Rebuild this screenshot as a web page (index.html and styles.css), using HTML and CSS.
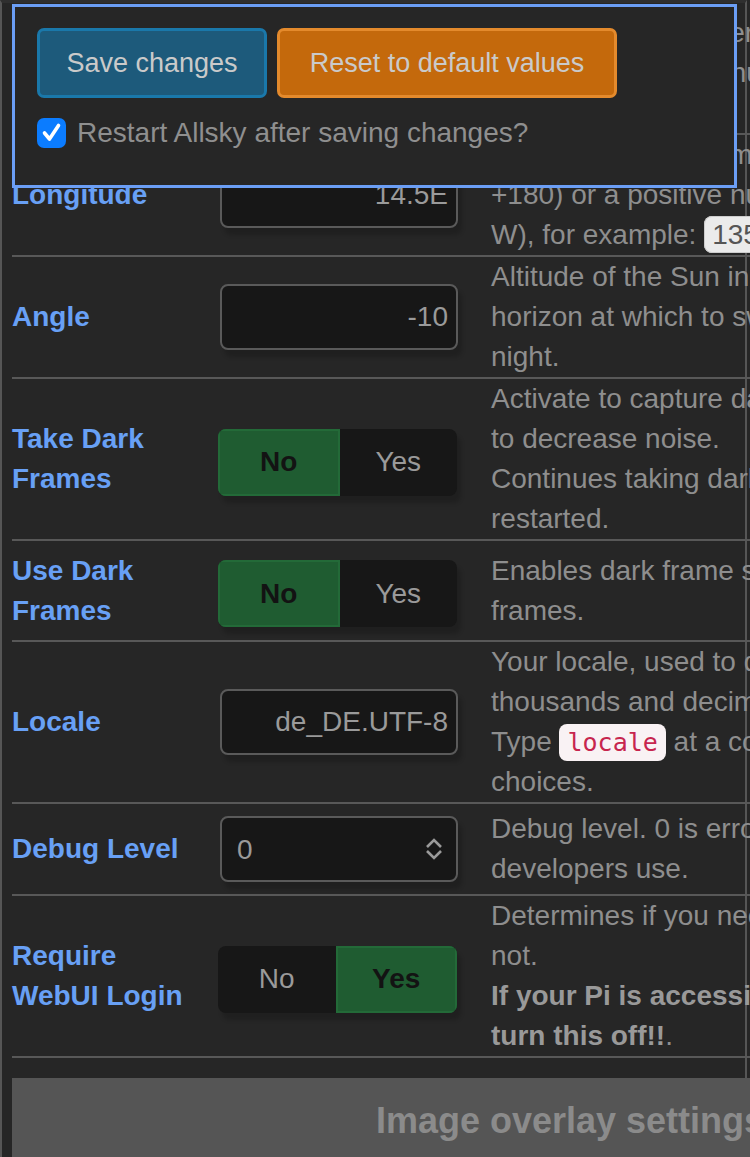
FILE: index.html
```html
<!DOCTYPE html>
<html lang="en">
<head>
    <meta charset="UTF-8">
    <meta name="viewport" content="width=device-width, initial-scale=1.0">
    <title>Allsky Settings</title>
    <link rel="stylesheet" href="styles.css">
</head>
<body>
    <div class="page">
        <div class="settings">
            <div class="row">
                <div class="label">Latitude</div>
                <div class="control"><input class="field" type="text" value="48.2N"></div>
                <div class="desc">Latitude of the camera. Use a negative number for<br>South or a positive number followed by N or S, fo<br>example: <span class="example">35.2N</span>.</div>
            </div>
            <div class="row">
                <div class="label">Longitude</div>
                <div class="control"><input class="field" type="text" value="14.5E"></div>
                <div class="desc">Longitude of the camera. Use a number from (-180 to<br>+180) or a positive number followed by E or<br>W), for example: <span class="example">135.5W</span>.</div>
            </div>
            <div class="row">
                <div class="label">Angle</div>
                <div class="control"><input class="field" type="text" value="-10"></div>
                <div class="desc">Altitude of the Sun in degrees below the<br>horizon at which to switch between day and<br>night.</div>
            </div>
            <div class="row">
                <div class="label">Take Dark Frames</div>
                <div class="control toggle-cell">
                    <div class="toggle"><span class="opt on">No</span><span class="opt">Yes</span></div>
                </div>
                <div class="desc">Activate to capture dark frames which are used<br>to decrease noise.<br>Continues taking dark frames until disabled or Allsky<br>restarted.</div>
            </div>
            <div class="row">
                <div class="label">Use Dark Frames</div>
                <div class="control toggle-cell">
                    <div class="toggle"><span class="opt on">No</span><span class="opt">Yes</span></div>
                </div>
                <div class="desc">Enables dark frame subtraction using the captured<br>frames.</div>
            </div>
            <div class="row">
                <div class="label">Locale</div>
                <div class="control"><input class="field" type="text" value="de_DE.UTF-8"></div>
                <div class="desc">Your locale, used to determine the format of<br>thousands and decimal separators.<br>Type <code>locale</code> at a command prompt to see possible<br>choices.</div>
            </div>
            <div class="row compact">
                <div class="label">Debug Level</div>
                <div class="control">
                    <div class="select-wrap">
                        <select class="field select">
                            <option selected>0</option>
                            <option>1</option>
                            <option>2</option>
                            <option>3</option>
                            <option>4</option>
                        </select>
                        <svg class="chevrons" width="18" height="26" viewBox="0 0 18 26">
                            <polyline points="2,11 9,4 16,11" fill="none" stroke="#9a9a9a" stroke-width="2.6"/>
                            <polyline points="2,15 9,22 16,15" fill="none" stroke="#9a9a9a" stroke-width="2.6"/>
                        </svg>
                    </div>
                </div>
                <div class="desc">Debug level. 0 is errors only; 1 adds info; 3 is for<br>developers use.</div>
            </div>
            <div class="row">
                <div class="label">Require WebUI Login</div>
                <div class="control toggle-cell">
                    <div class="toggle"><span class="opt">No</span><span class="opt on">Yes</span></div>
                </div>
                <div class="desc">Determines if you need to log in to the WebUI or<br>not.<br><strong>If your Pi is accessible from the Internet, DO NOT<br>turn this off!!</strong>.</div>
            </div>

            <div class="section-header">Image overlay settings</div>
        </div>

        <div class="save-bar">
            <div class="buttons">
                <button class="btn btn-save">Save changes</button>
                <button class="btn btn-reset">Reset to default values</button>
            </div>
            <label class="restart">
                <span class="checkbox">
                    <svg width="29" height="29" viewBox="0 0 29 29">
                        <polyline points="7.5,15 12.5,21 21.5,7.5" fill="none" stroke="#fff" stroke-width="3.6" stroke-linecap="round" stroke-linejoin="round"/>
                    </svg>
                </span>
                Restart Allsky after saving changes?
            </label>
        </div>
    </div>
</body>
</html>
```

FILE: styles.css
```css
* {
    box-sizing: border-box;
}

body {
    margin: 0;
    background-color: #262626;
    font-family: "Liberation Sans", Arial, Helvetica, sans-serif;
    overflow: hidden;
}

.page {
    position: relative;
    width: 747px;
    min-height: 1157px;
    border-left: 2px solid #565656;
    border-right: 2px solid #565656;
    border-top: 3px solid #2f2f2f;
    padding: 10px 0 0 10px;
}

.settings {
    width: 1116px;
}

.row {
    display: grid;
    grid-template-columns: 208px 271px 1fr;
    align-items: center;
    border-bottom: 2px solid #585858;
}

.label {
    color: #68a0f5;
    font-weight: bold;
    font-size: 28px;
    line-height: 40px;
    padding-right: 16px;
}

.control {
    padding: 16px 0;
}

.control.toggle-cell {
    padding: 19px 0 13px;
}

.row.compact .control {
    padding: 12px 0;
}

.desc {
    color: #8e8e8e;
    font-size: 28px;
    line-height: 40px;
    white-space: nowrap;
}

.desc strong {
    color: #999;
}

.field {
    display: block;
    width: 238px;
    height: 66px;
    margin: 0;
    border: 2px solid #5a5a5a;
    border-radius: 8px;
    background-color: #171717;
    color: #9a9a9a;
    font-family: inherit;
    font-size: 28px;
    text-align: right;
    padding: 0 8px;
    box-shadow: 4px 7px 4px rgba(0, 0, 0, 0.18);
    outline: none;
}

.select-wrap {
    position: relative;
    width: 238px;
}

.select {
    appearance: none;
    -webkit-appearance: none;
    text-align: left;
    padding: 0 15px;
}

.chevrons {
    position: absolute;
    right: 15px;
    top: 20px;
}

.toggle {
    display: flex;
    width: 239px;
    height: 67px;
    margin-left: -2px;
    border-radius: 8px;
    overflow: hidden;
    background-color: #171717;
    box-shadow: 4px 7px 4px rgba(0, 0, 0, 0.18);
}

.opt {
    flex: 1;
    display: flex;
    align-items: center;
    justify-content: center;
    font-size: 28px;
    color: #9a9a9a;
}

.opt.on {
    background-color: #1f5c31;
    border: 2px solid #236a38;
    color: #131313;
    font-weight: bold;
}

code {
    font-family: "DejaVu Sans Mono", "Liberation Mono", monospace;
    font-size: 25px;
    line-height: 1;
    color: #c7254e;
    background-color: #f9f2f4;
    border-radius: 8px;
    padding: 4px 8px;
}

.example {
    color: #555;
    background-color: #ebebeb;
    border: 1px solid #ccc;
    border-radius: 8px;
    padding: 2px 7px;
}

.section-header {
    margin-top: 20px;
    height: 90px;
    background-color: #555;
    color: #8b8b8b;
    font-size: 36px;
    font-weight: bold;
    line-height: 40px;
    text-align: center;
    padding-top: 23px;
}

.save-bar {
    position: absolute;
    top: 1px;
    left: 10px;
    width: 725px;
    height: 184px;
    border: 3px solid #6b9ef5;
    background-color: #262626;
    padding: 21px 0 0 22px;
}

.buttons {
    display: flex;
    gap: 10px;
}

.btn {
    height: 70px;
    border-radius: 7px;
    font-family: inherit;
    font-size: 27px;
    color: #cacaca;
    padding: 0;
    white-space: nowrap;
    cursor: pointer;
}

.btn-save {
    width: 230px;
    background-color: #1d5a7b;
    border: 3px solid #1a78aa;
}

.btn-reset {
    width: 340px;
    background-color: #c4690c;
    border: 3px solid #e48a2c;
}

.restart {
    display: flex;
    align-items: center;
    gap: 11px;
    margin-top: 19px;
    color: #8f8f8f;
    font-size: 28px;
}

.checkbox {
    display: block;
    width: 29px;
    height: 30px;
    border-radius: 7px;
    background-color: #0b7cff;
}

.checkbox svg {
    display: block;
}
```
